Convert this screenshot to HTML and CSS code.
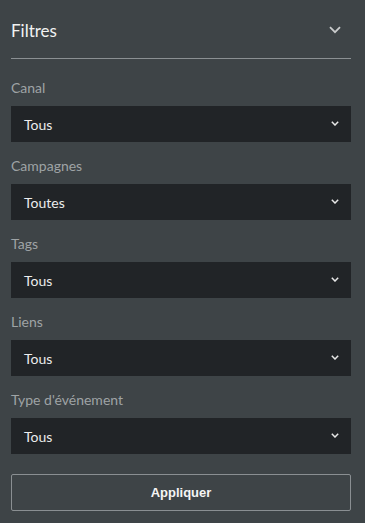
FILE: index.html
```html
<!DOCTYPE html>
<html lang="fr">
<head>
<meta charset="utf-8">
<link rel="stylesheet" href="styles.css">
</head>
<body>
<div class="panel">
  <div class="header">
    <span class="title">Filtres</span>
    <svg class="hchev" width="12" height="8" viewBox="0 0 12 8"><path d="M1 1.2 L6 6.2 L11 1.2" fill="none" stroke="#c9cbcc" stroke-width="1.8"/></svg>
  </div>
  <div class="fields">
    <div class="field">
      <div class="label">Canal</div>
      <div class="select"><span>Tous</span><svg class="schev" width="8" height="5" viewBox="0 0 8 5"><path d="M0.8 0.8 L4 4 L7.2 0.8" fill="none" stroke="#e8e8e8" stroke-width="1.5"/></svg></div>
    </div>
    <div class="field">
      <div class="label">Campagnes</div>
      <div class="select"><span>Toutes</span><svg class="schev" width="8" height="5" viewBox="0 0 8 5"><path d="M0.8 0.8 L4 4 L7.2 0.8" fill="none" stroke="#e8e8e8" stroke-width="1.5"/></svg></div>
    </div>
    <div class="field">
      <div class="label">Tags</div>
      <div class="select"><span>Tous</span><svg class="schev" width="8" height="5" viewBox="0 0 8 5"><path d="M0.8 0.8 L4 4 L7.2 0.8" fill="none" stroke="#e8e8e8" stroke-width="1.5"/></svg></div>
    </div>
    <div class="field">
      <div class="label">Liens</div>
      <div class="select"><span>Tous</span><svg class="schev" width="8" height="5" viewBox="0 0 8 5"><path d="M0.8 0.8 L4 4 L7.2 0.8" fill="none" stroke="#e8e8e8" stroke-width="1.5"/></svg></div>
    </div>
    <div class="field">
      <div class="label">Type d'événement</div>
      <div class="select"><span>Tous</span><svg class="schev" width="8" height="5" viewBox="0 0 8 5"><path d="M0.8 0.8 L4 4 L7.2 0.8" fill="none" stroke="#e8e8e8" stroke-width="1.5"/></svg></div>
    </div>
  </div>
  <button class="apply">Appliquer</button>
</div>
</body>
</html>
```
FILE: styles.css
```css
html, body {
  margin: 0;
  padding: 0;
  background: #3e4447;
  height: 100%;
}
.panel {
  padding: 0 14px 0 11px;
  font-family: Lato, "Open Sans", sans-serif;
}
.header {
  height: 58px;
  border-bottom: 1px solid #8b9093;
  display: flex;
  align-items: center;
  justify-content: space-between;
}
.title {
  color: #f1f2f2;
  font-size: 17px;
  padding-top: 2px;
}
.hchev {
  margin-right: 10px;
  margin-top: 1px;
}
.fields {
  display: flex;
  flex-direction: column;
  gap: 14px;
  padding-top: 19px;
}
.field {
  display: flex;
  flex-direction: column;
  gap: 9px;
}
.label {
  color: #9ea3a5;
  font-size: 14px;
  line-height: 19px;
}
.select {
  height: 36px;
  background: #212427;
  display: flex;
  align-items: center;
  justify-content: space-between;
  padding: 0 12px 0 13px;
  color: #eceded;
  font-size: 14px;
}
.schev {
  margin-top: -1px;
}
.apply {
  display: block;
  width: 100%;
  margin-top: 20px;
  height: 37px;
  background: transparent;
  border: 1px solid #8a8f92;
  border-radius: 2px;
  color: #f5f5f5;
  font-family: "Liberation Sans", Arial, sans-serif;
  font-weight: bold;
  font-size: 13px;
}
```
